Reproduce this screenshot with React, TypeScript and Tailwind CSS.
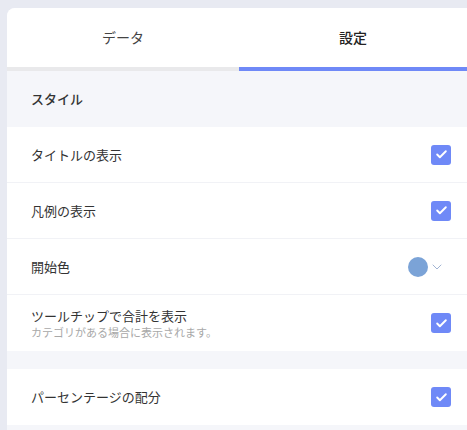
import { Check, ChevronDown } from 'lucide-react';

const font = { fontFamily: '"Noto Sans CJK JP", "Noto Sans", sans-serif' };

function CheckBox() {
  return (
    <div className="w-5 h-5 rounded-[3px] bg-[#6f89f7] flex items-center justify-center">
      <Check className="w-[13px] h-[13px] text-white" strokeWidth={3.5} />
    </div>
  );
}

function Row({ label, sub, children, last }: { label: string; sub?: string; children: React.ReactNode; last?: boolean }) {
  return (
    <div className={`h-14 pl-6 pr-[23px] flex items-center justify-between bg-white ${last ? '' : 'border-b border-[#f1f2f6]'}`}>
      <div className="flex flex-col">
        <span className="text-[13px] leading-[18px] text-[#333]">{label}</span>
        {sub && <span className="text-[11px] leading-[15px] text-[#a8a8a8]">{sub}</span>}
      </div>
      {children}
    </div>
  );
}

export default function App() {
  return (
    <div className="w-[467px] h-[430px] overflow-hidden bg-[#e8eaf2] pl-[7px] pt-[8px]" style={font}>
      <div className="w-[467px] rounded-t-[8px] bg-[#f5f6fa] overflow-hidden">
        <div className="flex h-[63px] bg-white">
          <div className="w-[232px] flex items-center justify-center border-b-4 border-[#e9e9eb] text-[14px] text-[#444]">
            データ
          </div>
          <div className="flex-1 flex items-center justify-center border-b-4 border-[#6f89f7] text-[14px] text-[#222] font-medium">
            <span className="mr-[7px]">設定</span>
          </div>
        </div>
        <div className="h-14 pl-6 flex items-center text-[13px] font-medium text-[#333]">スタイル</div>
        <Row label="タイトルの表示"><CheckBox /></Row>
        <Row label="凡例の表示"><CheckBox /></Row>
        <Row label="開始色">
          <div className="flex items-center gap-px mr-[6px]">
            <div className="w-5 h-5 rounded-full bg-[#7ba3d7]" />
            <ChevronDown className="w-4 h-4 text-[#93a8cc]" strokeWidth={1.3} />
          </div>
        </Row>
        <Row label="ツールチップで合計を表示" sub="カテゴリがある場合に表示されます。" last><CheckBox /></Row>
        <div className="h-[18px]" />
        <Row label="パーセンテージの配分" last><CheckBox /></Row>
        <div className="h-10" />
      </div>
    </div>
  );
}
